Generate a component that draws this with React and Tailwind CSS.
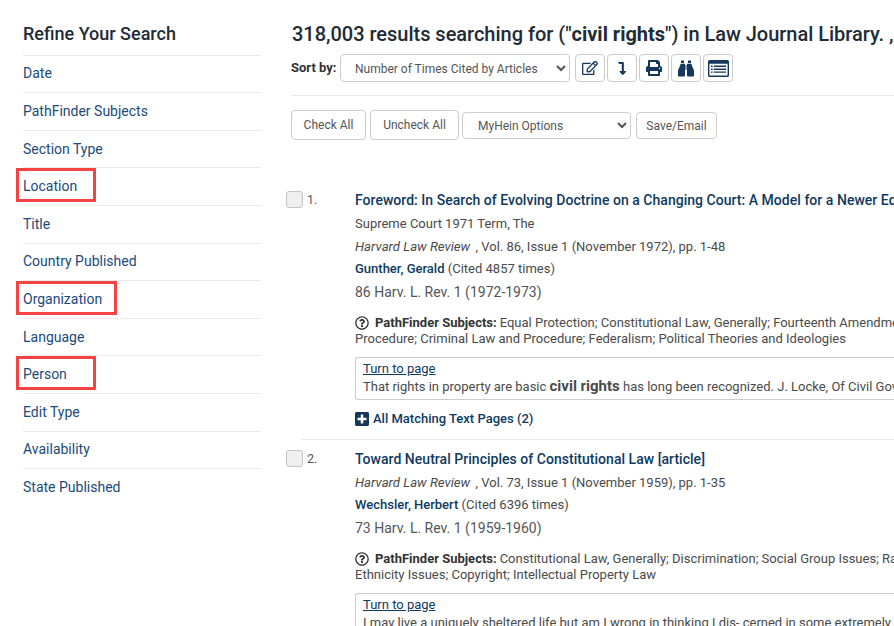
import { FaRegEdit, FaLevelDownAlt, FaPrint, FaPlusSquare, FaRegQuestionCircle } from 'react-icons/fa';

const navy = 'text-[#0e3a5f]';

const facets = [
  { label: 'Date' },
  { label: 'PathFinder Subjects' },
  { label: 'Section Type' },
  { label: 'Location', box: 'w-[80px]' },
  { label: 'Title' },
  { label: 'Country Published' },
  { label: 'Organization', box: 'w-[101px]' },
  { label: 'Language' },
  { label: 'Person', box: 'w-[80px]' },
  { label: 'Edit Type' },
  { label: 'Availability' },
  { label: 'State Published' },
];

function ListIcon() {
  return (
    <svg viewBox="0 0 18 16" preserveAspectRatio="none" className="w-[21px] h-[17px]" fill="#16375c">
      <path fillRule="evenodd" d="M1.5 0h15A1.5 1.5 0 0 1 18 1.5v13a1.5 1.5 0 0 1-1.5 1.5h-15A1.5 1.5 0 0 1 0 14.500v-13A1.500 1.500 0 0 1 1.500 0ZM1.200 3.500v11h15.600v-11Z" />
      <path d="M2.500 5.200h1.500v1.300H2.500ZM5 5.200h10.500v1.300H5ZM2.500 8h1.500v1.300H2.500ZM5 8h10.500v1.300H5ZM2.500 10.800h1.500v1.300H2.500ZM5 10.800h10.500v1.300H5Z" />
    </svg>
  );
}

function BinocularsIcon() {
  return (
    <svg viewBox="0 0 16 17" className="w-[16px] h-[17px]" fill="#16375c">
      <path d="M3 .500h3v2.500H3ZM10 .500h3v2.500h-3Z" />
      <path d="M2.600 3.700H7V15.700a.8.8 0 0 1-.8.8H.8a.8.8 0 0 1-.8-.8V11C0 9 2 7 2.600 3.700Z" />
      <path d="M13.400 3.700H9V15.700a.8.8 0 0 0 .8.8h5.400a.8.8 0 0 0 .8-.8V11C16 9 14 7 13.400 3.700Z" />
      <path d="M7.500 5h1v5h-1Z" />
    </svg>
  );
}

function IconBtn({ children }) {
  return (
    <button type="button" className="w-[30px] h-[28px] rounded border border-[#ccc] bg-white grid place-items-center text-[#16375c]">
      {children}
    </button>
  );
}

function Sidebar() {
  return (
    <aside className="w-[238px] shrink-0 ml-[23px] mr-[30px]">
      <h2 className="h-[54.600px] pt-[23px] text-[18px] leading-[22px] font-medium text-[#212b36]">Refine Your Search</h2>
      {facets.map((f) => (
        <div key={f.label} className="relative h-[37.600px] border-t border-[#eaeaea] flex items-center text-[14px] text-[#1b4a7a]">
          {f.label}
          {f.box && <span className={`absolute left-[-7px] top-0 h-[34px] border-[3px] border-[#f44343] ${f.box}`} />}
        </div>
      ))}
    </aside>
  );
}

function Result({ n, title, children, citation, reporter, subjects, snippet, author, cited, showMore }) {
  return (
    <div className="flex">
      <div className="w-[69px] shrink-0 flex items-start gap-[4px] ml-[-5px]">
        <span className="w-[17px] h-[17px] rounded-[3px] border border-[#c4c4c4] bg-[#efefef]" />
        <span className="mt-[2px] text-[12.500px] leading-[14px] text-[#555]">{n}.</span>
      </div>
      <div className="min-w-[600px] text-[13px] text-[#4a4a4a]">
        <a className={`block text-[14px] leading-[18px] font-medium tracking-[0.03px] whitespace-nowrap ${navy}`}>{title}</a>
        {children}
        <p className="mt-[6px] leading-[17px] whitespace-nowrap">
          <span className="italic text-[13.200px] mr-[2px]">Harvard Law Review</span> , {citation}
        </p>
        <p className="mt-[5px] leading-[17px]">
          <span className={`font-medium ${navy}`}>{author}</span> (Cited {cited} times)
        </p>
        <p className="mt-[6px] text-[14px] leading-[18px] text-[#555]">{reporter}</p>
        <div className="mt-[14px] w-[600px] leading-[16px] text-[13px]">
          <p className="whitespace-nowrap flex items-center">
            <FaRegQuestionCircle className="w-[14px] h-[14px] mr-[6px] text-[#333]" />
            <b className="font-bold text-[#333] mr-[3px]">PathFinder Subjects:</b> {subjects[0]}
          </p>
          <p className="whitespace-nowrap">{subjects[1]}</p>
        </div>
        <div className="mt-[10px] w-[620px] rounded-[3px] border border-[#ccc] border-r-0 pl-[7px] pt-[2px] pb-[3px] leading-[17px] h-[43px] whitespace-nowrap overflow-hidden">
          <a className={`block underline ${navy}`}>Turn to page</a>
          <p className="leading-[19px]">{snippet}</p>
        </div>
        {showMore && (
          <p className={`mt-[10px] flex items-center leading-[18px] font-medium ${navy}`}>
            <FaPlusSquare className="w-[14px] h-[16px] mr-[4px] text-[#16375c]" />
            All Matching Text Pages (2)
          </p>
        )}
      </div>
    </div>
  );
}

export default function App() {
  return (
    <div className="w-[894px] h-[626px] overflow-hidden bg-white flex font-['Roboto',sans-serif]">
      <Sidebar />
      <main className="flex-1 min-w-0">
        <h1 className="pt-[21px] pl-[1px] text-[20px] leading-[26px] font-medium tracking-[-0.02px] text-[#212b36] whitespace-nowrap">
          318,003 results searching for ("<b className="font-bold">civil rights</b>") in Law Journal Library. ,
        </h1>
        <div className="mt-[7px] flex items-center border-b border-[#eaeaea] pb-[13px]">
          <b className="font-bold text-[#333] w-[49px] text-[13px] whitespace-nowrap">Sort by:</b>
          <select className="w-[230px] h-[28px] pl-[10px] pr-1 pt-[1px] rounded border border-[#ccc] bg-white text-[12px] text-[#555]">
            <option>Number of Times Cited by Articles</option>
          </select>
          <div className="flex gap-[2px] ml-[5px]">
            <IconBtn><FaRegEdit className="w-[16px] h-[16px]" /></IconBtn>
            <IconBtn><FaLevelDownAlt className="w-[12px] h-[13px]" /></IconBtn>
            <IconBtn><FaPrint className="w-[16px] h-[16px]" /></IconBtn>
            <IconBtn><BinocularsIcon /></IconBtn>
            <IconBtn><ListIcon /></IconBtn>
          </div>
        </div>
        <div className="mt-[14px] flex items-center text-[12px] text-[#555]">
          <button type="button" className="w-[75px] h-[30px] rounded border border-[#ccc] bg-white">Check All</button>
          <button type="button" className="w-[89px] h-[30px] ml-[4px] rounded border border-[#ccc] bg-white">Uncheck All</button>
          <select className="w-[169px] h-[27px] ml-[3px] pl-[11px] pt-[1px] rounded border border-[#ccc] bg-white">
            <option>MyHein Options</option>
          </select>
          <button type="button" className="w-[81px] h-[27px] ml-[5px] pt-[1px] rounded border border-[#ccc] bg-white">Save/Email</button>
        </div>
        <div className="mt-[51px]">
          <Result
            n={1}
            title="Foreword: In Search of Evolving Doctrine on a Changing Court: A Model for a Newer Equal Protection"
            citation="Vol. 86, Issue 1 (November 1972), pp. 1-48"
            reporter="86 Harv. L. Rev. 1 (1972-1973)"
            author="Gunther, Gerald"
            cited="4857"
            subjects={[
              'Equal Protection; Constitutional Law, Generally; Fourteenth Amendment; Civil',
              'Procedure; Criminal Law and Procedure; Federalism; Political Theories and Ideologies',
            ]}
            snippet={<>That rights in property are basic <b className="font-bold text-[15px]">civil rights</b> has long been recognized. J. Locke, Of Civil Government</>}
            showMore
          >
            <p className="mt-[6px] leading-[17px]">Supreme Court 1971 Term, The</p>
          </Result>
          <div className="ml-[10px] mt-[11px] mb-[10px] border-t border-[#eaeaea]" />
          <Result
            n={2}
            title="Toward Neutral Principles of Constitutional Law [article]"
            citation="Vol. 73, Issue 1 (November 1959), pp. 1-35"
            reporter="73 Harv. L. Rev. 1 (1959-1960)"
            author="Wechsler, Herbert"
            cited="6396"
            subjects={[
              'Constitutional Law, Generally; Discrimination; Social Group Issues; Race and',
              'Ethnicity Issues; Copyright; Intellectual Property Law',
            ]}
            snippet="I may live a uniquely sheltered life but am I wrong in thinking I dis- cerned in some extremely"
          />
        </div>
      </main>
    </div>
  );
}
